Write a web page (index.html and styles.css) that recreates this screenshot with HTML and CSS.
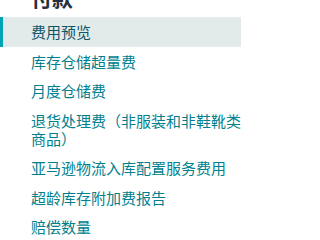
FILE: index.html
```html
<!DOCTYPE html>
<html lang="zh-CN">
<head>
<meta charset="utf-8">
<link rel="stylesheet" href="styles.css">
</head>
<body>
<nav class="sidebar">
  <h2 class="sidebar-title">付款</h2>
  <ul class="nav-list">
    <li class="nav-item active">费用预览</li>
    <li class="nav-item">库存仓储超量费</li>
    <li class="nav-item">月度仓储费</li>
    <li class="nav-item">退货处理费（非服装和非鞋靴类商品）</li>
    <li class="nav-item">亚马逊物流入库配置服务费用</li>
    <li class="nav-item">超龄库存附加费报告</li>
    <li class="nav-item">赔偿数量</li>
  </ul>
</nav>
</body>
</html>
```

FILE: styles.css
```css
html, body {
  margin: 0;
  padding: 0;
  background: #ffffff;
  overflow: hidden;
}

.sidebar {
  width: 241px;
  font-family: "Noto Sans CJK SC", "Noto Sans", "Liberation Sans", sans-serif;
}

.sidebar-title {
  margin: -15px 0 8px 31px;
  font-size: 21px;
  line-height: 24px;
  font-weight: 700;
  color: #232f3e;
}

.nav-list {
  list-style: none;
  margin: 0;
  padding: 0;
}

.nav-item {
  padding: 6px 0 5.5px 28px;
  border-left: 3px solid transparent;
  font-size: 15px;
  line-height: 18px;
  color: #007f8f;
}

.nav-item.active {
  background: #e3eaea;
  border-left-color: #00a4b4;
  color: #0c5668;
}
```
